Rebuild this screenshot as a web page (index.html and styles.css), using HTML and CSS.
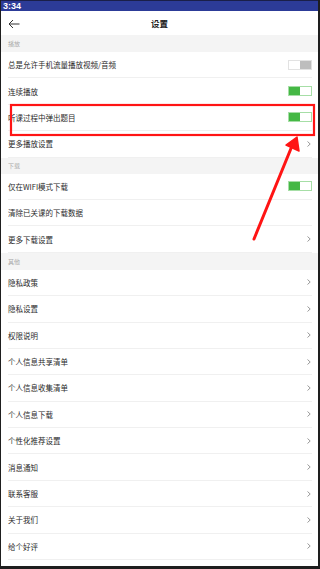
FILE: index.html
```
<!DOCTYPE html>
<html lang="zh-CN">
<head>
    <meta charset="UTF-8">
    <meta name="viewport" content="width=device-width, initial-scale=1.0">
    <title>设置</title>
    <link rel="stylesheet" href="styles.css">
</head>
<body>
    <div class="phone">
        <div class="status-bar">3:34</div>
        <div class="top-bar">
            <svg class="back" width="12" height="10" viewBox="0 0 12 10"><path d="M11.5 5H1M5 1L1 5l4 4" fill="none" stroke="#333" stroke-width="1"/></svg>
            <div class="title">设置</div>
        </div>

        <div class="section-title">播放</div>
        <div class="row"><div class="row-inner"><span>总是允许手机流量播放视频/音频</span><span class="toggle off"></span></div></div>
        <div class="row"><div class="row-inner"><span>连续播放</span><span class="toggle on"></span></div></div>
        <div class="row"><div class="row-inner"><span>听课过程中弹出题目</span><span class="toggle on"></span></div></div>
        <div class="row"><div class="row-inner"><span>更多播放设置</span><svg class="chev" width="4" height="6" viewBox="0 0 4 6"><path d="M0.5 0.5L3.2 3 0.5 5.5" fill="none" stroke="#999" stroke-width="1"/></svg></div></div>

        <div class="section-title short">下载</div>
        <div class="row"><div class="row-inner"><span>仅在WIFI模式下载</span><span class="toggle on"></span></div></div>
        <div class="row"><div class="row-inner"><span>清除已关课的下载数据</span></div></div>
        <div class="row"><div class="row-inner"><span>更多下载设置</span><svg class="chev" width="4" height="6" viewBox="0 0 4 6"><path d="M0.5 0.5L3.2 3 0.5 5.5" fill="none" stroke="#999" stroke-width="1"/></svg></div></div>

        <div class="section-title">其他</div>
        <div class="row"><div class="row-inner"><span>隐私政策</span><svg class="chev" width="4" height="6" viewBox="0 0 4 6"><path d="M0.5 0.5L3.2 3 0.5 5.5" fill="none" stroke="#999" stroke-width="1"/></svg></div></div>
        <div class="row"><div class="row-inner"><span>隐私设置</span><svg class="chev" width="4" height="6" viewBox="0 0 4 6"><path d="M0.5 0.5L3.2 3 0.5 5.5" fill="none" stroke="#999" stroke-width="1"/></svg></div></div>
        <div class="row"><div class="row-inner"><span>权限说明</span><svg class="chev" width="4" height="6" viewBox="0 0 4 6"><path d="M0.5 0.5L3.2 3 0.5 5.5" fill="none" stroke="#999" stroke-width="1"/></svg></div></div>
        <div class="row"><div class="row-inner"><span>个人信息共享清单</span><svg class="chev" width="4" height="6" viewBox="0 0 4 6"><path d="M0.5 0.5L3.2 3 0.5 5.5" fill="none" stroke="#999" stroke-width="1"/></svg></div></div>
        <div class="row"><div class="row-inner"><span>个人信息收集清单</span><svg class="chev" width="4" height="6" viewBox="0 0 4 6"><path d="M0.5 0.5L3.2 3 0.5 5.5" fill="none" stroke="#999" stroke-width="1"/></svg></div></div>
        <div class="row"><div class="row-inner"><span>个人信息下载</span><svg class="chev" width="4" height="6" viewBox="0 0 4 6"><path d="M0.5 0.5L3.2 3 0.5 5.5" fill="none" stroke="#999" stroke-width="1"/></svg></div></div>
        <div class="row"><div class="row-inner"><span>个性化推荐设置</span><svg class="chev" width="4" height="6" viewBox="0 0 4 6"><path d="M0.5 0.5L3.2 3 0.5 5.5" fill="none" stroke="#999" stroke-width="1"/></svg></div></div>
        <div class="row"><div class="row-inner"><span>消息通知</span><svg class="chev" width="4" height="6" viewBox="0 0 4 6"><path d="M0.5 0.5L3.2 3 0.5 5.5" fill="none" stroke="#999" stroke-width="1"/></svg></div></div>
        <div class="row"><div class="row-inner"><span>联系客服</span><svg class="chev" width="4" height="6" viewBox="0 0 4 6"><path d="M0.5 0.5L3.2 3 0.5 5.5" fill="none" stroke="#999" stroke-width="1"/></svg></div></div>
        <div class="row"><div class="row-inner"><span>关于我们</span><svg class="chev" width="4" height="6" viewBox="0 0 4 6"><path d="M0.5 0.5L3.2 3 0.5 5.5" fill="none" stroke="#999" stroke-width="1"/></svg></div></div>
        <div class="row"><div class="row-inner"><span>给个好评</span><svg class="chev" width="4" height="6" viewBox="0 0 4 6"><path d="M0.5 0.5L3.2 3 0.5 5.5" fill="none" stroke="#999" stroke-width="1"/></svg></div></div>
    </div>

    <!-- red annotation drawn over the screenshot -->
    <svg class="annotation" width="320" height="569" viewBox="0 0 320 569">
        <rect x="11" y="105" width="303" height="30" fill="none" stroke="#ff1414" stroke-width="2.2"/>
        <path d="M254 239L292 146" stroke="#ff1414" stroke-width="3" stroke-linecap="round"/>
        <path d="M297 137L299 151 286 145Z" fill="#ff1414" stroke="#ff1414" stroke-width="1.5" stroke-linejoin="round"/>
    </svg>
</body>
</html>
```
FILE: styles.css
```
body {
    margin: 0;
    background-color: #1e1e1e;
    font-family: "Noto Sans CJK SC", "Noto Sans", sans-serif;
}
.phone {
    margin: 0 2px 0 1px;
    background-color: #fff;
    height: 566px;
    overflow: hidden;
}
.status-bar {
    height: 11px;
    margin-left: -1px;
    margin-right: -2px;
    background-color: #2c3b98;
    border-top: 1px solid #1a1f4a;
    box-sizing: border-box;
    color: #fff;
    font-family: "Liberation Sans", sans-serif;
    font-weight: bold;
    font-size: 9px;
    line-height: 10px;
    padding-left: 3px;
}
.top-bar {
    height: 24px;
    display: flex;
    align-items: center;
    justify-content: center;
    position: relative;
    background-color: #fff;
}
.back {
    position: absolute;
    left: 7px;
    top: 8px;
}
.title {
    font-size: 8.5px;
    font-weight: bold;
    color: #222;
}
.section-title {
    height: 17px;
    background-color: #f4f4f4;
    color: #aaa;
    font-size: 6px;
    line-height: 17px;
    padding-left: 7px;
}
.section-title.short {
    height: 16px;
    line-height: 16px;
}
.row {
    padding: 0 6px 0 7px;
    background-color: #fff;
}
.row-inner {
    height: 26.4px;
    box-sizing: border-box;
    border-bottom: 1px solid #f0f0f0;
    display: flex;
    align-items: center;
    justify-content: space-between;
    font-size: 7.5px;
    color: #2a2a2a;
}
.chev {
    margin-right: 1px;
}
.toggle {
    width: 24px;
    height: 10px;
    box-sizing: border-box;
    display: flex;
}
.toggle.on {
    border: 1px solid #a6dea6;
    background: linear-gradient(to right, #45b845 50%, #fff 50%);
}
.toggle.off {
    border: 1px solid #e2e2e2;
    background: linear-gradient(to right, #fff 50%, #bdbdbd 50%);
}
.annotation {
    position: absolute;
    left: 0;
    top: 0;
}
```
